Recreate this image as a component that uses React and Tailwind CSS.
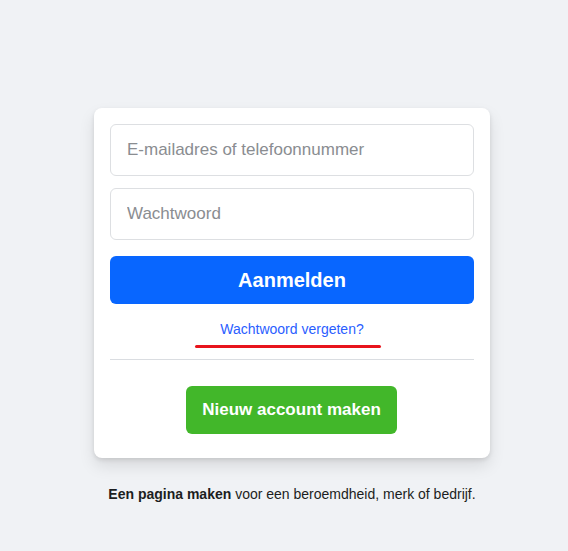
export default function App() {
  return (
    <div className="min-h-[551px] w-full bg-[#f0f2f5] pt-[108px] pl-4 flex flex-col items-center" style={{ fontFamily: '"Liberation Sans", Arial, sans-serif' }}>
      <div className="w-[396px] bg-white rounded-lg shadow-[0_2px_4px_rgba(0,0,0,0.1),0_8px_16px_rgba(0,0,0,0.1)] p-4 pb-6 flex flex-col">
        <input
          type="text"
          placeholder="E-mailadres of telefoonnummer"
          className="h-[52px] w-full rounded-md border border-[#dddfe2] px-4 text-[17px] text-[#1d2129] placeholder:text-[#8a8d91] outline-none"
        />
        <input
          type="password"
          placeholder="Wachtwoord"
          className="mt-3 h-[52px] w-full rounded-md border border-[#dddfe2] px-4 text-[17px] text-[#1d2129] placeholder:text-[#8a8d91] outline-none"
        />
        <button className="mt-4 h-12 w-full rounded-md bg-[#0866ff] text-white text-[20px] font-bold leading-[48px]">
          Aanmelden
        </button>
        <a className="mt-4 block text-center text-[14px] leading-[18px] text-[#2a5eff]" href="#">
          Wachtwoord vergeten?
        </a>
        <div className="mt-[7px] ml-[85px] h-[3px] w-[186px] rounded-full bg-[#e8141c]" />
        <div className="mt-[11px] h-px w-full bg-[#dadde1]" />
        <div className="mt-[26px] flex">
          <button className="ml-[76px] h-12 w-[211px] rounded-md bg-[#42b72a] text-white text-[17px] font-bold">
            Nieuw account maken
          </button>
        </div>
      </div>
      <p className="mt-[27px] text-[14px] leading-[18px] text-[#1c1e21]">
        <span className="font-bold">Een pagina maken</span> voor een beroemdheid, merk of bedrijf.
      </p>
    </div>
  );
}
